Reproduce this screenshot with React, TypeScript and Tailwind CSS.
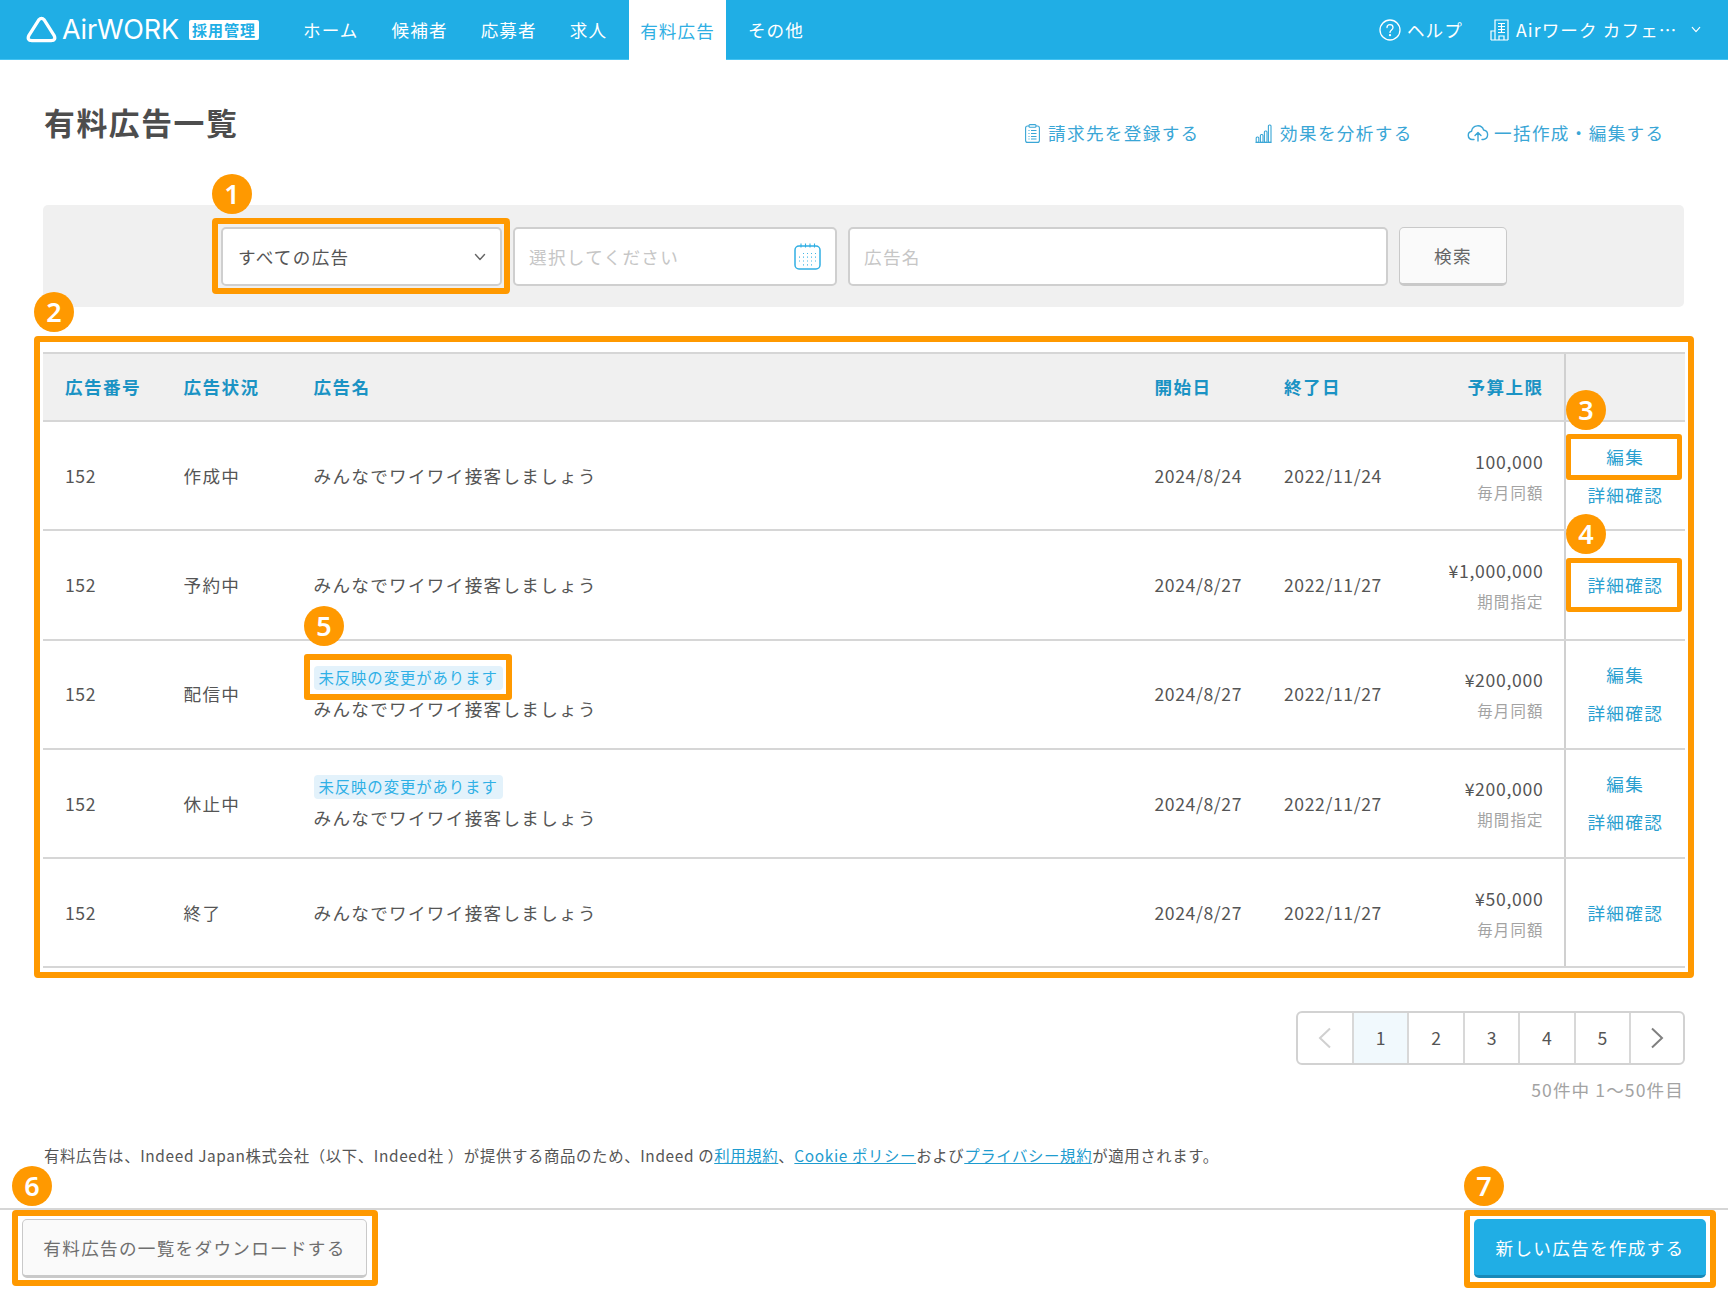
import React from "react";

const Chevron = ({ className = "" }: { className?: string }) => (
  <svg viewBox="0 0 12 8" className={className} fill="none" stroke="currentColor" strokeWidth="1.4" strokeLinecap="round" strokeLinejoin="round">
    <path d="M1.5 1.5 6 6.5l4.5-5" />
  </svg>
);

const Logo = () => (
  <div className="flex items-center">
    <svg viewBox="0 0 32 28" className="w-[31px] h-[27px] -mt-[1px]" fill="none" stroke="#fff" strokeWidth="3.4" strokeLinejoin="round">
      <path d="M13.200 4Q16 .8 18.800 4L29 20Q31.500 25.500 26 25.500H6Q.5 25.500 3 20Z" />
    </svg>
    <span className="ml-[5px] text-white text-[27px] leading-[30px] font-['Inter',sans-serif] font-normal tracking-[-0.2px] w-[122px] whitespace-nowrap">AirWORK</span>
    <span className="ml-[5px] w-[70px] h-[20px] bg-white rounded-[2px] text-[#20aee5] text-[15px] leading-[20px] font-bold text-center tracking-[1px]">採用管理</span>
  </div>
);

const navItems = ["ホーム", "候補者", "応募者", "求人", "有料広告", "その他"];

const Header = () => (
  <header className="h-[60px] bg-[#20aee5] border-b border-[#45c3f2] flex items-stretch pl-[26px] shrink-0">
    <Logo />
    <nav className="ml-[33px] flex gap-[11px] text-[17.6px] tracking-[1.1px]">
      {navItems.map((n) => (
        <a
          key={n}
          className={
            n === "有料広告"
              ? "h-[60px] px-[11px] pt-[2px] flex items-center bg-white text-[#30afe3]"
              : "h-[59px] px-[11px] pt-[2px] flex items-center text-white"
          }
        >
          {n}
        </a>
      ))}
    </nav>
    <div className="ml-auto flex items-center text-white text-[17.6px] tracking-[1.1px] pr-[27px]">
      <svg viewBox="0 0 22 22" className="w-[22px] h-[22px]" fill="none" stroke="#fff" strokeWidth="1.3" strokeLinecap="round">
        <circle cx="11" cy="11" r="10" />
        <path d="M8 8.600c0-1.900 1.300-3 3-3s3 1.100 3 2.800c0 2.400-3 2.600-3 5" />
        <circle cx="11" cy="16.200" r=".5" fill="#fff" />
      </svg>
      <span className="ml-[6px] pt-[2px]">ヘルプ</span>
      <svg viewBox="0 0 19 22" className="ml-[27px] w-[19px] h-[22px]" fill="none" stroke="#fff" strokeWidth="1.2">
        <path d="M5 21V1h13v20M1 21V12h4M1 21h17" />
        <path d="M8 4.500h7M8 7.500h7M8 10.500h7M8 13.500h7M11.500 4v10" />
        <path d="M9 21v-4h5v4" />
      </svg>
      <span className="ml-[7px] pt-[2px] w-[161px] whitespace-nowrap">Airワーク カフェ…</span>
      <Chevron className="ml-[14px] w-[10px] h-[7px]" />
    </div>
  </header>
);

const ClipboardIcon = () => (
  <svg viewBox="0 0 15 19" className="w-[15px] h-[19px]" fill="none" stroke="#3aa6d6" strokeWidth="1.1">
    <rect x=".6" y="2" width="13.800" height="16.400" rx="2" />
    <rect x="4" y=".6" width="7" height="2.600" rx="1" fill="#fff" />
    <path d="M3.500 6.500h1M6 6.500h5.500M3.500 9.500h1M6 9.500h5.500M3.500 12.500h1M6 12.500h5.500M3.500 15h1M6 15h5.500" />
  </svg>
);

const BarsIcon = () => (
  <svg viewBox="0 0 17 19" className="w-[17px] h-[19px]" fill="none" stroke="#3aa6d6" strokeWidth="1.1">
    <path d="M.5 18.400h16" />
    <rect x="1.200" y="13" width="2.600" height="5.400" rx="1" />
    <rect x="5.400" y="10.500" width="2.600" height="7.900" rx="1" />
    <rect x="9.400" y="7" width="2.600" height="11.400" rx="1" />
    <rect x="13.400" y="1" width="2.600" height="17.400" rx="1" />
  </svg>
);

const CloudIcon = () => (
  <svg viewBox="0 0 22 18" className="w-[22px] h-[18px]" fill="none" stroke="#3aa6d6" strokeWidth="1.4" strokeLinecap="round" strokeLinejoin="round">
    <path d="M7 15.500H5.200a4.200 4.200 0 0 1-.6-8.300A6.200 6.200 0 0 1 16.600 6a4.800 4.800 0 0 1-.2 9.500H15" />
    <path d="M11 17V9M8 11.500 11 8.500l3 3" />
  </svg>
);

const CalendarIcon = () => (
  <svg viewBox="0 0 27 27" className="w-[27px] h-[27px]" fill="none" stroke="#30afe3" strokeWidth="1.5">
    <rect x="1" y="3" width="25" height="23" rx="4" />
    <path d="M6 .5v4M10.500.5v4M15 .5v4M19.500.5v4" strokeWidth="1.100" transform="translate(1 0)" />
    <path d="M9 10.500h.9M13 10.500h.9M17 10.500h.9M21 10.500h.9M5 14.200h.9M9 14.200h.9M13 14.200h.9M17 14.200h.9M21 14.200h.9M5 18h.9M9 18h.9M13 18h.9M17 18h.9M21 18h.9M9 21.800h.9M13 21.800h.9M17 21.800h.9" strokeWidth="1.200" />
  </svg>
);

const TopLink = ({ icon, label, gap, w }: { icon: React.ReactNode; label: string; gap: string; w: string }) => (
  <a className={`flex items-center h-[24px] text-[#3aa6d6] ${gap}`}>
    {icon}
    <span className={w}>{label}</span>
  </a>
);

const TitleRow = () => (
  <div className="h-[145px] pl-[44px] pr-[66px] flex items-start shrink-0">
    <h1 className="mt-[40px] text-[#4d4d4d] text-[30.800px] leading-[44px] font-bold tracking-[1.600px]">有料広告一覧</h1>
    <div className="ml-auto mt-[61px] flex gap-[56px] text-[17.6px] tracking-[1.35px] whitespace-nowrap">
      <TopLink icon={<ClipboardIcon />} label="請求先を登録する" gap="gap-[8px]" w="w-[151px]" />
      <TopLink icon={<BarsIcon />} label="効果を分析する" gap="gap-[8px]" w="w-[131px]" />
      <TopLink icon={<CloudIcon />} label="一括作成・編集する" gap="gap-[5px]" w="w-[168px]" />
    </div>
  </div>
);

const SearchPanel = () => (
  <div className="ml-[43px] w-[1641px] h-[102px] bg-[#f0f0f0] rounded-[5px] pt-[22px] pl-[178px] flex gap-[11px] text-[17.6px] tracking-[1.3px] shrink-0">
    <div className="w-[281px] h-[59px] bg-white border-2 border-[#cfcfcf] rounded-[5px] flex items-center pl-[15px] pr-[14px] pt-[2px] text-[#555]">
      <span>すべての広告</span>
      <Chevron className="ml-auto w-[12px] h-[8px] text-[#666] -mt-[2px]" />
    </div>
    <div className="w-[324px] h-[59px] bg-white border-2 border-[#cfcfcf] rounded-[5px] flex items-center pl-[14px] pr-[14px] text-[#c6c6c6]">
      <span className="pt-[2px]">選択してください</span>
      <span className="ml-auto"><CalendarIcon /></span>
    </div>
    <div className="w-[540px] h-[59px] bg-white border-2 border-[#cfcfcf] rounded-[5px] flex items-center pl-[14px] pt-[2px] text-[#c6c6c6]">
      <span>広告名</span>
    </div>
    <button className="w-[108px] h-[59px] bg-[#fafafa] border border-b-[3px] border-[#c9c9c9] rounded-[5px] text-[#666] text-[17.6px] pt-[2px]">検索</button>
  </div>
);

type Row = { status: string; tag?: boolean; start: string; end: string; budget: string; kind: string; edit: boolean };
const rows: Row[] = [
  { status: "作成中", start: "2024/8/24", end: "2022/11/24", budget: "100,000", kind: "毎月同額", edit: true },
  { status: "予約中", start: "2024/8/27", end: "2022/11/27", budget: "¥1,000,000", kind: "期間指定", edit: false },
  { status: "配信中", tag: true, start: "2024/8/27", end: "2022/11/27", budget: "¥200,000", kind: "毎月同額", edit: true },
  { status: "休止中", tag: true, start: "2024/8/27", end: "2022/11/27", budget: "¥200,000", kind: "期間指定", edit: true },
  { status: "終了", start: "2024/8/27", end: "2022/11/27", budget: "¥50,000", kind: "毎月同額", edit: false },
];

const cols = "grid grid-cols-[118.500px_130px_841px_129.500px_106.500px_175px_1fr] items-center pl-[22px]";

const Table = () => (
  <div className="mt-[45px] ml-[43px] w-[1642px] shrink-0">
    <div className={`${cols} h-[70px] bg-[#f0f0f0] border-y-2 border-[#d6d6d6] text-[#1b93c4] text-[17.6px] font-bold tracking-[1.4px]`}>
      <div>広告番号</div>
      <div>広告状況</div>
      <div>広告名</div>
      <div>開始日</div>
      <div>終了日</div>
      <div className="text-right pr-[20px] border-r-2 border-[#d0d0d0] h-full flex items-center justify-end">予算上限</div>
      <div />
    </div>
    {rows.map((r, i) => (
      <div key={i} className={`${cols} h-[109.25px] border-b-2 border-[#d6d6d6] text-[#555] text-[17.6px] tracking-[1.3px]`}>
        <div className="tracking-[0.6px] pt-[1px]">152</div>
        <div className="pt-[1px]">{r.status}</div>
        <div className={r.tag ? "flex flex-col items-start pb-[1px]" : "flex flex-col items-start"}>
          {r.tag && (
            <span className="mb-[7px] h-[24px] w-[189px] bg-[#e3f2fb] rounded-[4px] text-[#2fb0e6] text-[15.4px] leading-[22px] tracking-[0.9px] pl-[5px] whitespace-nowrap">
              未反映の変更があります
            </span>
          )}
          <span className="leading-[24px] whitespace-nowrap">みんなでワイワイ接客しましょう</span>
        </div>
        <div className="tracking-[0.6px] pt-[1px]">{r.start}</div>
        <div className="tracking-[0.6px] pt-[1px]">{r.end}</div>
        <div className="h-full border-r-2 border-[#d0d0d0] pr-[20px] flex flex-col items-end justify-center">
          <span className="leading-[26px] tracking-[0.7px] pt-[1px]">{r.budget}</span>
          <span className="mt-[5px] leading-[24px] text-[15.4px] text-[#a3a3a3] tracking-[1.15px]">{r.kind}</span>
        </div>
        <div className="flex flex-col items-center gap-[14px] text-[#2a9fd0] leading-[24px]">
          {r.edit && <a>編集</a>}
          <a>詳細確認</a>
        </div>
      </div>
    ))}
  </div>
);

const Pagination = () => (
  <div className="mt-[43px] pr-[43px] flex justify-end shrink-0">
    <div className="flex h-[54px] border-2 border-[#d2d2d2] rounded-[6px] overflow-hidden text-[#555] text-[17.6px]">
      <div className="w-[56px] flex items-center justify-center border-r-2 border-[#d8d8d8]">
        <svg viewBox="0 0 14 22" className="w-[14px] h-[22px]" fill="none" stroke="#d0d0d0" strokeWidth="2"><path d="M12 1.500 2 11l10 9.500" /></svg>
      </div>
      {[1, 2, 3, 4, 5].map((n) => (
        <div key={n} className={n === 1 ? "w-[55.4px] flex items-center justify-center border-r-2 border-[#d8d8d8] bg-[#f1f9fd]" : "w-[55.4px] flex items-center justify-center border-r-2 border-[#d8d8d8]"}>{n}</div>
      ))}
      <div className="w-[52px] flex items-center justify-center">
        <svg viewBox="0 0 14 22" className="w-[14px] h-[22px]" fill="none" stroke="#808080" strokeWidth="2"><path d="M2 1.500 12 11 2 20.500" /></svg>
      </div>
    </div>
  </div>
);

const Notes = () => (
  <>
    <div className="mt-[13px] pr-[44px] text-right text-[#a3a3a3] text-[17.6px] leading-[24px] tracking-[1.1px] shrink-0">50件中 1〜50件目</div>
    <p className="mt-[41px] pl-[44px] text-[#555] text-[15.4px] leading-[24px] tracking-[0.64px] whitespace-nowrap shrink-0">
      有料広告は、Indeed Japan株式会社（以下、Indeed社 ）が提供する商品のため、Indeed の<a className="text-[#1f9ccf] underline">利用規約</a>、<a className="text-[#1f9ccf] underline">Cookie ポリシー</a>および<a className="text-[#1f9ccf] underline">プライバシー規約</a>が適用されます。
    </p>
  </>
);

const Footer = () => (
  <footer className="mt-auto h-[96px] border-t-2 border-[#d6d6d6] px-[22px] pt-[9px] flex justify-between items-start text-[17.6px] tracking-[1.3px] shrink-0">
    <button className="w-[345px] h-[59px] pt-[2px] bg-[#fafafa] border border-b-[3px] border-[#c9c9c9] rounded-[5px] text-[#6f6f6f]">有料広告の一覧をダウンロードする</button>
    <button className="w-[232px] h-[59px] pt-[2px] bg-[#20aee5] border-b-[3px] border-[#1889b8] rounded-[5px] text-white">新しい広告を作成する</button>
  </footer>
);

const Num = ({ n, pos }: { n: number; pos: string }) => (
  <div className={`absolute ${pos} w-[40px] h-[40px] rounded-full bg-[#ff9900] text-white text-[27px] font-semibold font-['Noto_Sans',sans-serif] leading-[40px] text-center`}>{n}</div>
);

const Annotations = () => (
  <>
    <div className="absolute left-[212px] top-[218px] w-[298px] h-[76px] border-[6px] border-[#ff9900] rounded-[4px]" />
    <div className="absolute left-[34px] top-[336px] w-[1660px] h-[642px] border-[6px] border-[#ff9900] rounded-[4px]" />
    <div className="absolute left-[1566px] top-[434px] w-[116px] h-[46px] border-[5px] border-[#ff9900] rounded-[3px]" />
    <div className="absolute left-[1566px] top-[558px] w-[116px] h-[54px] border-[5px] border-[#ff9900] rounded-[3px]" />
    <div className="absolute left-[304px] top-[654px] w-[208px] h-[46px] border-[6px] border-[#ff9900] rounded-[3px]" />
    <div className="absolute left-[12px] top-[1210px] w-[366px] h-[76px] border-[6px] border-[#ff9900] rounded-[4px]" />
    <div className="absolute left-[1464px] top-[1210px] w-[252px] h-[78px] border-[6px] border-[#ff9900] rounded-[4px]" />
    <Num n={1} pos="left-[212px] top-[174px]" />
    <Num n={2} pos="left-[34px] top-[292px]" />
    <Num n={3} pos="left-[1566px] top-[390px]" />
    <Num n={4} pos="left-[1566px] top-[514px]" />
    <Num n={5} pos="left-[304px] top-[606px]" />
    <Num n={6} pos="left-[12px] top-[1166px]" />
    <Num n={7} pos="left-[1464px] top-[1166px]" />
  </>
);

export default function App() {
  return (
    <div className="relative w-[1728px] h-[1304px] bg-white flex flex-col overflow-hidden font-['Noto_Sans_CJK_JP','Noto_Sans',sans-serif]">
      <Header />
      <TitleRow />
      <SearchPanel />
      <Table />
      <Pagination />
      <Notes />
      <Footer />
      <Annotations />
    </div>
  );
}
